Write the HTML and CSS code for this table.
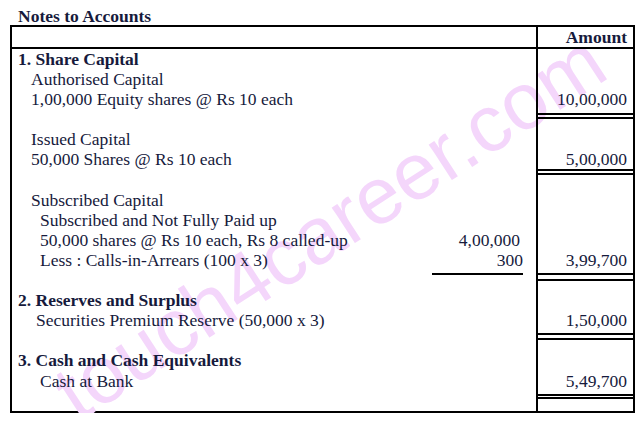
FILE: index.html
```html
<!DOCTYPE html>
<html>
<head>
<meta charset="utf-8">
<title>Notes to Accounts</title>
<link rel="stylesheet" href="styles.css">
</head>
<body>
<div class="page">
  <div class="title">Notes to Accounts</div>
  <div class="sheet">
    <div class="wm">touch4career.com</div>

    <div class="c-desc head"></div>
    <div class="c-sub head"></div>
    <div class="c-amt head bold">Amount</div>

    <div class="c-desc l0 bold">1. Share Capital</div>
    <div class="c-sub"></div>
    <div class="c-amt"></div>

    <div class="c-desc l1">Authorised Capital</div>
    <div class="c-sub"></div>
    <div class="c-amt"></div>

    <div class="c-desc l1">1,00,000 Equity shares @ Rs 10 each</div>
    <div class="c-sub"></div>
    <div class="c-amt">10,00,000</div>

    <div class="c-desc"></div>
    <div class="c-sub"></div>
    <div class="c-amt"><div class="dbl dbl-1"></div></div>

    <div class="c-desc l1">Issued Capital</div>
    <div class="c-sub"></div>
    <div class="c-amt"></div>

    <div class="c-desc l1">50,000 Shares @ Rs 10 each</div>
    <div class="c-sub"></div>
    <div class="c-amt">5,00,000</div>

    <div class="c-desc"></div>
    <div class="c-sub"></div>
    <div class="c-amt"><div class="dbl dbl-2"></div></div>

    <div class="c-desc l1">Subscribed Capital</div>
    <div class="c-sub"></div>
    <div class="c-amt"></div>

    <div class="c-desc l2">Subscribed and Not Fully Paid up</div>
    <div class="c-sub"></div>
    <div class="c-amt"></div>

    <div class="c-desc l2">50,000 shares @ Rs 10 each, Rs 8 called-up</div>
    <div class="c-sub c-sub-wide">4,00,000</div>
    <div class="c-amt"></div>

    <div class="c-desc l2">Less : Calls-in-Arrears (100 x 3)</div>
    <div class="c-sub">300</div>
    <div class="c-amt">3,99,700</div>

    <div class="c-desc"></div>
    <div class="c-sub"><div class="single"></div></div>
    <div class="c-amt"><div class="dbl dbl-3"></div></div>

    <div class="c-desc l0 bold">2. Reserves and Surplus</div>
    <div class="c-sub"></div>
    <div class="c-amt"></div>

    <div class="c-desc l1b">Securities Premium Reserve (50,000 x 3)</div>
    <div class="c-sub"></div>
    <div class="c-amt">1,50,000</div>

    <div class="c-desc"></div>
    <div class="c-sub"></div>
    <div class="c-amt"><div class="dbl dbl-4"></div></div>

    <div class="c-desc l0 bold">3. Cash and Cash Equivalents</div>
    <div class="c-sub"></div>
    <div class="c-amt"></div>

    <div class="c-desc l2">Cash at Bank</div>
    <div class="c-sub"></div>
    <div class="c-amt">5,49,700</div>

    <div class="c-desc"></div>
    <div class="c-sub"></div>
    <div class="c-amt"><div class="dbl dbl-5"></div></div>
  </div>
</div>
</body>
</html>
```

FILE: styles.css
```css
html, body {
  margin: 0;
  padding: 0;
  background: #ffffff;
}

.page {
  font-family: "Liberation Serif", "Times New Roman", serif;
  font-size: 17.5px;
  color: #161a3c;
  padding-top: 7px;
}

.title {
  margin-left: 18px;
  line-height: 18px;
  font-weight: bold;
  white-space: nowrap;
}

.bold {
  font-weight: bold;
}

.sheet {
  position: relative;
  z-index: 0;
  margin-left: 10px;
  width: 625px;
  box-sizing: border-box;
  border: 2px solid #000;
  display: grid;
  grid-template-columns: 420px 104px 97px;
  grid-template-rows: 22px repeat(18, 20.1px);
  line-height: 20.1px;
  white-space: nowrap;
}

.wm {
  position: absolute;
  left: 318px;
  top: 200px;
  transform: translate(-50%, -50%) rotate(-33deg);
  font-family: "Liberation Sans", Arial, sans-serif;
  font-size: 80px;
  line-height: 1;
  color: #f4d6fb;
  z-index: -1;
  white-space: nowrap;
}

.head {
  border-bottom: 2px solid #000;
  line-height: 20px;
}

.c-desc {
  min-width: 0;
}

.l0 { padding-left: 6px; }
.l1 { padding-left: 19px; }
.l1b { padding-left: 24px; }
.l2 { padding-left: 28px; }

.c-sub {
  text-align: right;
  padding-right: 13px;
}

.c-sub-wide {
  padding-right: 16px;
}

.c-amt {
  border-left: 2px solid #000;
  text-align: right;
  padding-right: 6px;
}

.dbl {
  border-top: 2px solid #000;
  border-bottom: 2px solid #000;
  margin-right: -6px;
}

.dbl-1 { margin-top: 3.5px; height: 2px; }
.dbl-2 { margin-top: -1px; height: 2.5px; }
.dbl-3 { margin-top: 3.2px; height: 3.4px; }
.dbl-4 { margin-top: 2.6px; height: 3px; }
.dbl-5 { margin-top: 3.6px; height: 1.3px; }

.single {
  border-top: 2px solid #000;
  margin-top: 3.2px;
}
```
